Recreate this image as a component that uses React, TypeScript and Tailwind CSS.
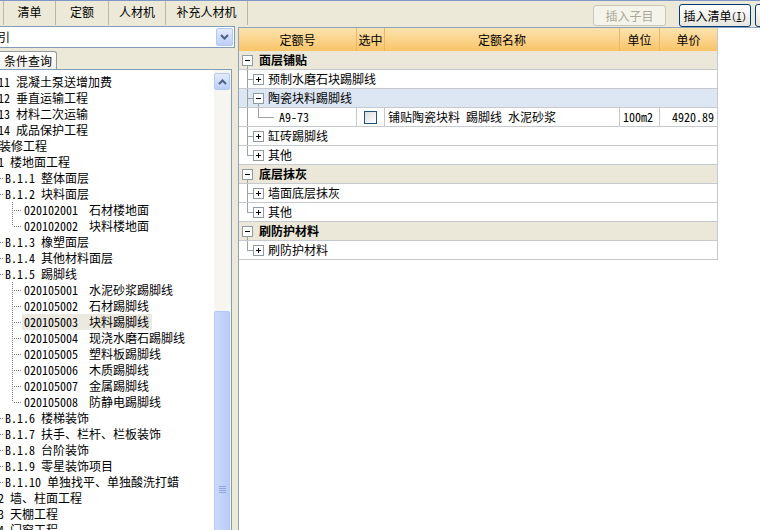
import React from 'react';

type LeftRow =
  | { t: 'top' | 'root' | 'cut'; text: string }
  | { t: 'sec'; text: string }
  | { t: 'item'; code: string; text: string; last?: boolean; sel?: boolean };

const LEFT: LeftRow[] = [
  { t: 'top', text: '11 混凝土泵送增加费' },
  { t: 'top', text: '12 垂直运输工程' },
  { t: 'top', text: '13 材料二次运输' },
  { t: 'top', text: '14 成品保护工程' },
  { t: 'cut', text: '装修工程' },
  { t: 'root', text: '1 楼地面工程' },
  { t: 'sec', text: 'B.1.1 整体面层' },
  { t: 'sec', text: 'B.1.2 块料面层' },
  { t: 'item', code: '020102001', text: '石材楼地面' },
  { t: 'item', code: '020102002', text: '块料楼地面', last: true },
  { t: 'sec', text: 'B.1.3 橡塑面层' },
  { t: 'sec', text: 'B.1.4 其他材料面层' },
  { t: 'sec', text: 'B.1.5 踢脚线' },
  { t: 'item', code: '020105001', text: '水泥砂浆踢脚线' },
  { t: 'item', code: '020105002', text: '石材踢脚线' },
  { t: 'item', code: '020105003', text: '块料踢脚线', sel: true },
  { t: 'item', code: '020105004', text: '现浇水磨石踢脚线' },
  { t: 'item', code: '020105005', text: '塑料板踢脚线' },
  { t: 'item', code: '020105006', text: '木质踢脚线' },
  { t: 'item', code: '020105007', text: '金属踢脚线' },
  { t: 'item', code: '020105008', text: '防静电踢脚线', last: true },
  { t: 'sec', text: 'B.1.6 楼梯装饰' },
  { t: 'sec', text: 'B.1.7 扶手、栏杆、栏板装饰' },
  { t: 'sec', text: 'B.1.8 台阶装饰' },
  { t: 'sec', text: 'B.1.9 零星装饰项目' },
  { t: 'sec', text: 'B.1.10 单独找平、单独酸洗打蜡' },
  { t: 'root', text: '2 墙、柱面工程' },
  { t: 'root', text: '3 天棚工程' },
  { t: 'root', text: '4 门窗工程' },
];

// right grid: tree rows
type GridRow =
  | { k: 'cat'; text: string }
  | { k: 'child'; text: string; open?: boolean; last?: boolean; hl?: boolean }
  | { k: 'leaf' };

const GRID: GridRow[] = [
  { k: 'cat', text: '面层铺贴' },
  { k: 'child', text: '预制水磨石块踢脚线' },
  { k: 'child', text: '陶瓷块料踢脚线', open: true, hl: true },
  { k: 'leaf' },
  { k: 'child', text: '缸砖踢脚线' },
  { k: 'child', text: '其他', last: true },
  { k: 'cat', text: '底层抹灰' },
  { k: 'child', text: '墙面底层抹灰' },
  { k: 'child', text: '其他', last: true },
  { k: 'cat', text: '刷防护材料' },
  { k: 'child', text: '刷防护材料', last: true },
];

const COLS = [
  { label: '定额号', w: 'w-[118px]' },
  { label: '选中', w: 'w-[28px]' },
  { label: '定额名称', w: 'w-[235px]' },
  { label: '单位', w: 'w-[40px]' },
  { label: '单价', w: 'w-[57px]' },
];

const LINE = '#a0a0a0';

function Box({ x, open }: { x: number; open: boolean }) {
  return (
    <g>
      <rect x={x + 0.5} y={4.5} width={10} height={10} fill="#fff" stroke="#8f9ba3" />
      <line x1={x + 3} y1={9.5} x2={x + 8} y2={9.5} stroke="#000" />
      {!open && <line x1={x + 5.5} y1={7} x2={x + 5.5} y2={12} stroke="#000" />}
    </g>
  );
}

function Chevron({ up }: { up?: boolean }) {
  return (
    <svg width="9" height="6" viewBox="0 0 9 6">
      <path d={up ? 'M1 5 L4.5 1.5 L8 5' : 'M1 1 L4.5 4.5 L8 1'} fill="none" stroke="#4d6185" strokeWidth="2" />
    </svg>
  );
}

function XpBtn({ up, className }: { up?: boolean; className: string }) {
  return (
    <div className={`flex items-center justify-center rounded-[2px] border border-[#b4c8f6] bg-gradient-to-b from-[#e3ebfe] to-[#bccffa] ${className}`}>
      <Chevron up={up} />
    </div>
  );
}

function LeftTreeRow({ r }: { r: LeftRow }) {
  if (r.t === 'top' || r.t === 'root') {
    return <div className="h-[16px] leading-[16px] whitespace-pre -ml-[2px]">{r.text}</div>;
  }
  if (r.t === 'cut') {
    return <div className="h-[16px] leading-[16px] whitespace-pre -ml-[1px]">{r.text}</div>;
  }
  if (r.t === 'sec') {
    return (
      <div className="flex h-[16px] items-center">
        <svg width="5" height="16" className="shrink-0">
          <line x1="0" y1="8.5" x2="4" y2="8.5" stroke="#808080" strokeDasharray="1 1" />
        </svg>
        <span className="leading-[16px] whitespace-pre">{r.text}</span>
      </div>
    );
  }
  return (
    <div className="flex h-[16px] items-center">
      <svg width="22" height="16" className="shrink-0">
        <line x1="12.5" y1="0" x2="12.5" y2={r.last ? 8 : 16} stroke="#808080" strokeDasharray="1 1" />
        <line x1="14" y1="8.5" x2="22" y2="8.5" stroke="#808080" strokeDasharray="1 1" />
      </svg>
      <div className={`flex h-full items-center pl-[2px] pr-[3px] ${r.sel ? 'bg-[#ebe9e0]' : ''}`}>
        <span className="w-[65px] leading-[16px]">{r.code}</span>
        <span className="leading-[16px]">{r.text}</span>
      </div>
    </div>
  );
}

function GridTreeRow({ r }: { r: GridRow }) {
  if (r.k === 'cat') {
    return (
      <div className="flex h-[19px] border-b border-[#c6c9cf] bg-[#ebe8d9]">
        <svg width="20" height="18" className="shrink-0">
          <Box x={3} open />
          <line x1="8.5" y1="15" x2="8.5" y2="18" stroke={LINE} />
        </svg>
        <span className="font-bold leading-[18px]">{r.text}</span>
      </div>
    );
  }
  if (r.k === 'child') {
    return (
      <div className={`flex h-[19px] border-b border-[#c6c9cf] ${r.hl ? 'bg-[#dde7f4]' : 'bg-white'}`}>
        <svg width="29" height="18" className="shrink-0">
          <line x1="8.5" y1="0" x2="8.5" y2={r.last ? 9.5 : 18} stroke={LINE} />
          <line x1="8" y1="9.5" x2="14" y2="9.5" stroke={LINE} />
          <Box x={14} open={!!r.open} />
          {r.open && <line x1="19.5" y1="15" x2="19.5" y2="18" stroke={LINE} />}
        </svg>
        <span className="leading-[18px]">{r.text}</span>
      </div>
    );
  }
  return (
    <div className="flex h-[19px] border-b border-[#c6c9cf] bg-white">
      <div className="flex w-[118px] shrink-0 border-r border-[#c6c9cf]">
        <svg width="40" height="18" className="shrink-0">
          <line x1="8.5" y1="0" x2="8.5" y2="18" stroke={LINE} />
          <line x1="19.5" y1="0" x2="19.5" y2="9.5" stroke={LINE} />
          <line x1="19" y1="9.5" x2="35" y2="9.5" stroke={LINE} />
        </svg>
        <span className="leading-[18px]">A9-73</span>
      </div>
      <div className="flex w-[28px] shrink-0 items-center justify-center border-r border-[#c6c9cf]">
        <div className="h-[13px] w-[13px] border border-[#1c5180] bg-gradient-to-br from-[#dcdcd7] to-white" />
      </div>
      <div className="w-[235px] shrink-0 border-r border-[#c6c9cf] pl-[3px] leading-[18px] whitespace-pre">铺贴陶瓷块料 踢脚线 水泥砂浆</div>
      <div className="w-[40px] shrink-0 border-r border-[#c6c9cf] pl-[3px] leading-[18px]">100m2</div>
      <div className="w-[57px] shrink-0 pr-[3px] text-right leading-[18px]">4920.89</div>
    </div>
  );
}

export default function App() {
  return (
    <div className="h-[530px] w-[760px] overflow-hidden bg-[#ece9d8] text-[12px] text-black [font-family:'Noto_Sans_Mono_CJK_SC','Noto_Sans_CJK_SC',sans-serif]">
      {/* toolbar with tabs and buttons */}
      <div className="flex h-[26px] border-t border-[#7d98c9]">
        <div className="flex h-[24px] pl-[3px]">
          {[
            ['清单', 'w-[52px]'],
            ['定额', 'w-[53px]'],
            ['人材机', 'w-[57px]'],
            ['补充人材机', 'w-[83px]'],
          ].map(([label, w], i) => (
            <div key={label} className={`${w} flex justify-center border-l border-[#b9b7a8] pt-[3px] leading-[16px] ${i === 3 ? 'border-r' : ''}`}>
              {label}
            </div>
          ))}
        </div>
        <div className="ml-[345px] mt-[4px] flex h-[21px] w-[73px] shrink-0 items-center justify-center rounded-[3px] border border-[#c9c7ba] bg-[#f5f4ea] text-[#aca899]">
          插入子目
        </div>
        <div className="ml-[13px] mt-[3px] flex h-[23px] w-[72px] shrink-0 items-center justify-center rounded-[3px] border border-[#003c74] bg-gradient-to-b from-white to-[#e6e5de]">
          插入清单<span className="text-[10px]">(<u>I</u>)</span>
        </div>
        <div className="ml-[4px] mt-[3px] h-[23px] w-[60px] shrink-0 rounded-[3px] border border-[#003c74] bg-gradient-to-b from-white to-[#e6e5de]" />
      </div>

      <div className="flex h-[504px]">
        {/* left panel */}
        <div className="flex w-[238px] shrink-0 flex-col">
          <div className="flex h-[22px] w-[235px] items-center border-y border-r border-[#7f9db9] bg-white p-[1px]">
            <span className="-ml-[3px] flex-1 leading-[16px]">引</span>
            <XpBtn className="h-full w-[17px]" />
          </div>
          <div className="mt-[3px] flex h-[18px] w-[57px] items-center rounded-tr-[3px] border-t border-r border-[#919b9c] bg-gradient-to-b from-white to-[#f1f0ea] pl-[4px] leading-[16px]">
            条件查询
          </div>
          <div className="flex min-h-0 w-[232px] flex-1 border-t border-r border-[#7f9db9] bg-white">
            <div className="flex-1 overflow-hidden pt-[4px]">
              {LEFT.map((r, i) => (
                <LeftTreeRow key={i} r={r} />
              ))}
            </div>
            <div className="flex w-[17px] shrink-0 flex-col bg-[#f6f5f0] pt-[3px]">
              <XpBtn up className="h-[17px] w-[16px] shrink-0" />
              <div className="mt-[221px] h-[360px] w-[16px] shrink-0 rounded-[2px] border border-[#b3c6f4] bg-gradient-to-r from-[#cbd9fd] to-[#b8ccf9] pt-[174px]">
                <div className="mx-auto flex w-[7px] flex-col gap-[1px]">
                  {[0, 1, 2, 3].map((g) => (
                    <div key={g} className="h-[1px] bg-[#8ea6e4]" />
                  ))}
                </div>
              </div>
            </div>
          </div>
        </div>

        {/* right panel */}
        <div className="mt-[1px] flex-1 border-l border-t border-[#8fa3c0] bg-white">
          <div className="w-[479px] border-r border-[#c6c9cf]">
            <div className="flex h-[23px] bg-gradient-to-b from-[#fde3ae] to-[#f8c466]">
              {COLS.map((c, i) => (
                <div key={c.label} className={`${c.w} flex shrink-0 items-center justify-center ${i < 4 ? 'border-r border-[#e8b86c]' : ''}`}>
                  {c.label}
                </div>
              ))}
            </div>
            {GRID.map((r, i) => (
              <GridTreeRow key={i} r={r} />
            ))}
          </div>
        </div>
      </div>
    </div>
  );
}
